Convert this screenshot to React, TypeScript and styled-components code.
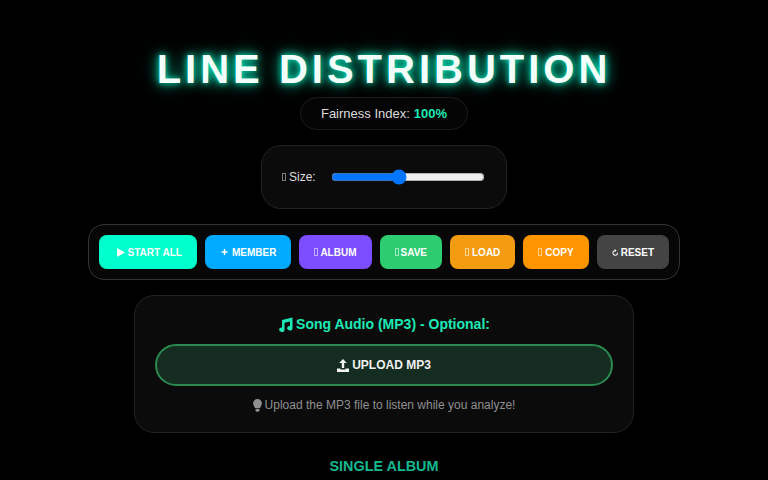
import React from "react";
import styled, { createGlobalStyle } from "styled-components";

const GlobalStyle = createGlobalStyle`
  html, body {
    margin: 0;
    height: 480px;
    overflow: hidden;
    background: #000;
    font-family: "Liberation Sans", Arial, sans-serif;
    color: #fff;
  }
`;

const Page = styled.div`
  display: flex;
  flex-direction: column;
  align-items: center;
  padding-top: 44px;
`;

const Title = styled.h1`
  margin: 0;
  font-size: 40px;
  line-height: 50px;
  font-weight: 700;
  letter-spacing: 4px;
  color: #f2fffb;
  text-shadow: 0 0 6px rgba(0, 255, 204, 0.9), 0 0 14px rgba(0, 255, 204, 0.7),
    0 0 22px rgba(0, 255, 204, 0.35);
`;

const Fairness = styled.div`
  margin-top: 3px;
  box-sizing: border-box;
  width: 168px;
  height: 33px;
  display: flex;
  align-items: center;
  justify-content: center;
  gap: 4px;
  border: 1px solid #1c1c1c;
  border-radius: 17px;
  background: #050505;
  font-size: 13px;
  color: #ddd;
`;

const Percent = styled.b`
  color: #1de9b6;
`;

const SizePanel = styled.div`
  margin-top: 15px;
  box-sizing: border-box;
  width: 246px;
  height: 64px;
  padding: 0 20px;
  display: flex;
  align-items: center;
  gap: 15.5px;
  background: #0b0b0b;
  border: 1px solid #222;
  border-radius: 20px;
`;

const SizeLabel = styled.span`
  display: flex;
  align-items: center;
  flex: none;
  font-size: 12px;
  color: #ddd;
  white-space: nowrap;
`;

/* the reference shows missing-glyph boxes where its emoji would be */
const Tofu = styled.i<{ $gap?: number }>`
  display: inline-block;
  box-sizing: border-box;
  width: 4px;
  height: 8px;
  margin-right: ${(p) => p.$gap ?? 2}px;
  border: 1px solid currentColor;
  opacity: 0.55;
`;

const Range = styled.input`
  width: 154px;
  margin: 0;
  flex: none;
`;

const Toolbar = styled.div`
  margin-top: 15px;
  box-sizing: border-box;
  width: 592px;
  height: 56px;
  padding: 0 10px;
  display: flex;
  align-items: center;
  gap: 8px;
  background: #070707;
  border: 1px solid #333;
  border-radius: 16px;
`;

const ActionButton = styled.button<{ $bg: string }>`
  height: 34px;
  padding: 0 15px;
  display: flex;
  align-items: center;
  flex: none;
  border: none;
  border-radius: 8px;
  background: ${(p) => p.$bg};
  color: #fff;
  font-family: inherit;
  font-size: 10px;
  font-weight: 700;
  white-space: nowrap;
`;

const ButtonIcon = styled.svg<{ $left?: number }>`
  flex: none;
  margin-left: ${(p) => p.$left ?? 0}px;
  margin-right: 3px;
  fill: currentColor;
`;

const AudioPanel = styled.div`
  margin-top: 15px;
  box-sizing: border-box;
  width: 500px;
  height: 138px;
  padding: 19px 20px;
  display: flex;
  flex-direction: column;
  align-items: center;
  background: #0b0b0b;
  border: 1px solid #222;
  border-radius: 20px;
`;

const AudioTitle = styled.div`
  height: 18px;
  display: flex;
  align-items: center;
  gap: 3px;
  font-size: 14px;
  font-weight: 700;
  color: #1de9b6;
`;

const UploadButton = styled.button`
  margin-top: 11px;
  box-sizing: border-box;
  width: 100%;
  height: 42px;
  display: flex;
  align-items: center;
  justify-content: center;
  gap: 3px;
  border: 2px solid #2a8a50;
  border-radius: 21px;
  background: #152c20;
  color: #f2f2f2;
  font-family: inherit;
  font-size: 12px;
  font-weight: 700;
`;

const Hint = styled.div`
  margin-top: 12px;
  display: flex;
  align-items: center;
  gap: 3px;
  font-size: 12px;
  color: #909090;
`;

const SectionTitle = styled.div`
  margin-top: 25px;
  font-size: 14.4px;
  font-weight: 700;
  color: #14b890;
`;

const MusicIcon = () => (
  <svg width="15" height="15" viewBox="0 0 15 15" fill="currentColor">
    <path d="M4 3 14.500.5v10.700a2.700 2.300 0 1 1-2.500-2.300V4.500L6.500 5.800v6.900a2.700 2.300 0 1 1-2.500-2.300z" />
  </svg>
);

const UploadIcon = () => (
  <svg width="12" height="13" viewBox="0 0 12 13" fill="currentColor">
    <path d="M6 0 9.800 4H7.200v5H4.800V4H2.200z" />
    <path d="M0 9.500h3.500v1h5v-1H12V13H0z" />
  </svg>
);

const BulbIcon = () => (
  <svg width="9" height="13" viewBox="0 0 9 13" fill="currentColor">
    <path d="M4.500 0a4.400 4.400 0 0 1 4.400 4.400c0 1.800-1.400 2.800-1.900 4.600H2C1.500 7.200.1 6.200.1 4.400A4.400 4.400 0 0 1 4.500 0z" />
    <path d="M2.500 9.800h4v1.400l-1 1.500h-2l-1-1.500z" />
  </svg>
);

const App: React.FC = () => {
  return (
    <Page>
      <GlobalStyle />
      <Title>LINE DISTRIBUTION</Title>
      <Fairness>
        Fairness Index: <Percent>100%</Percent>
      </Fairness>
      <SizePanel>
        <SizeLabel>
          <Tofu $gap={3} />
          Size:
        </SizeLabel>
        <Range type="range" min={0} max={100} defaultValue={43} />
      </SizePanel>
      <Toolbar>
        <ActionButton $bg="#00ffcc">
          <ButtonIcon $left={2.5} width="8" height="9" viewBox="0 0 8 9">
            <path d="M0 0 8 4.500 0 9z" />
          </ButtonIcon>
          START ALL
        </ActionButton>
        <ActionButton $bg="#00aaff">
          <ButtonIcon width="9" height="8" viewBox="0 0 8 8">
            <path d="M3.300 1h1.400v2.300H7v1.400H4.700V7H3.300V4.700H1V3.300h2.300z" />
          </ButtonIcon>
          MEMBER
        </ActionButton>
        <ActionButton $bg="#7c4dff">
          <Tofu />
          ALBUM
        </ActionButton>
        <ActionButton $bg="#2ecc71">
          <Tofu />
          SAVE
        </ActionButton>
        <ActionButton $bg="#f39c12">
          <Tofu $gap={3} />
          LOAD
        </ActionButton>
        <ActionButton $bg="#ff9500">
          <Tofu $gap={3} />
          COPY
        </ActionButton>
        <ActionButton $bg="#444">
          <ButtonIcon width="6" height="7" viewBox="0 0 6 7">
            <path d="M3.300 0v1.200A2.800 2.800 0 1 1 0 3.800h1a1.800 1.800 0 1 0 2.300-1.600v1L1.500 1.600z" transform="translate(6 0) scale(-1 1)" />
          </ButtonIcon>
          RESET
        </ActionButton>
      </Toolbar>
      <AudioPanel>
        <AudioTitle>
          <MusicIcon /> Song Audio (MP3) - Optional:
        </AudioTitle>
        <UploadButton>
          <UploadIcon /> UPLOAD MP3
        </UploadButton>
        <Hint>
          <BulbIcon /> Upload the MP3 file to listen while you analyze!
        </Hint>
      </AudioPanel>
      <SectionTitle>SINGLE ALBUM</SectionTitle>
    </Page>
  );
};

export default App;
